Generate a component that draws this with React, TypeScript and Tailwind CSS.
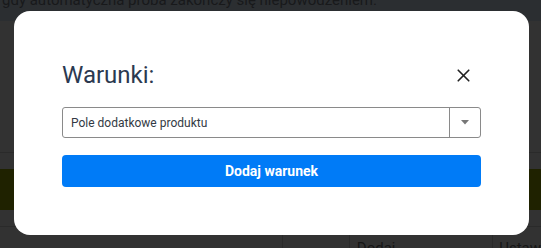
import { X } from "lucide-react"

export default function App() {
  return (
    <div className="relative w-[541px] h-[248px] overflow-hidden bg-[#323232] font-['Roboto',sans-serif]">
      {/* page behind the overlay */}
      <div className="h-[21px] bg-[#2b2e31] overflow-hidden">
        <p className="-mt-[9px] pl-[2px] text-[15px] leading-[18px] text-[#18191b] whitespace-nowrap">
          gdy automatyczna próba zakończy się niepowodzeniem.
        </p>
      </div>
      <div className="h-[131px]" />
      <div className="h-px bg-[#2a2a2a]" />
      <div className="h-[16px]" />
      <div className="h-[41px] bg-[#1f2200]" />
      <div className="h-[16px]" />
      <div className="h-px bg-[#2a2a2a]" />
      <div className="flex h-[21px] text-[15px] text-[#161616]">
        <div className="w-[286px] border-r border-[#2a2a2a]" />
        <div className="w-[68px] border-r border-[#2a2a2a]" />
        <div className="w-[145px] border-r border-[#2a2a2a] pl-[7px] pt-[12px] leading-[18px]">Dodaj</div>
        <div className="pl-[6px] pt-[12px] leading-[18px]">Ustaw</div>
      </div>

      {/* modal */}
      <div className="absolute left-[14px] top-[11px] w-[515px] h-[224px] rounded-[16px] bg-white px-[48px] pt-[50px]">
        <div className="flex items-center justify-between h-[28px]">
          <h2 className="text-[24px] leading-[28px] text-[#2b3950]">Warunki:</h2>
          <button className="mr-[7px] text-[#222]">
            <X size={21} strokeWidth={1.9} />
          </button>
        </div>
        <div className="mt-[18px] flex h-[31px] rounded-[3px] border border-[#8a8a8a]">
          <div className="flex-1 flex items-center pl-[8px] text-[12px] text-[#333a44]">
            Pole dodatkowe produktu
          </div>
          <div className="w-[31px] border-l border-[#8a8a8a] flex items-center justify-center">
            <svg width="8" height="5" viewBox="0 0 8 5">
              <path d="M0 0 L8 0 L4 4.5 Z" fill="#777" />
            </svg>
          </div>
        </div>
        <button className="mt-[17px] w-full h-[32px] rounded-[4px] bg-[#007bf7] text-white text-[14px] font-bold">
          Dodaj warunek
        </button>
      </div>
    </div>
  )
}
